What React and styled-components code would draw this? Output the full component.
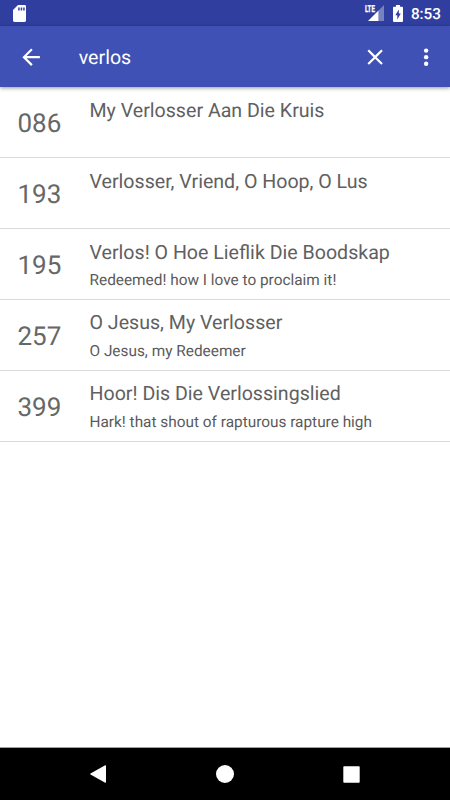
import styled, { createGlobalStyle } from 'styled-components';

const GlobalStyle = createGlobalStyle`
  * {
    box-sizing: border-box;
  }
  body {
    margin: 0;
    background-color: #fff;
    font-family: Roboto, "Liberation Sans", sans-serif;
    text-rendering: geometricPrecision;
  }
`

const Screen = styled.div`
  display: flex;
  flex-direction: column;
  width: 100%;
  height: 100vh;
  overflow: hidden;
`

const StatusBar = styled.div`
  display: flex;
  flex: none;
  align-items: center;
  height: 26px;
  padding: 0 9px 0 13px;
  background-color: #303f9f;
  color: #fff;
`

const StatusIcons = styled.div`
  display: flex;
  align-items: center;
  margin-left: auto;
`

const Network = styled.div`
  display: flex;
  position: relative;
  width: 19px;
  height: 16px;
  margin-right: 9px;
  justify-content: flex-end;
  align-items: flex-end;
`

const NetworkType = styled.span`
  position: absolute;
  top: 0;
  left: 0;
  font-size: 9.5px;
  line-height: 9px;
  font-weight: 700;
  -webkit-text-stroke: 0.35px #fff;
  transform: scaleX(0.64);
  transform-origin: left;
`

const Clock = styled.span`
  margin-left: 7.5px;
  padding-top: 2px;
  font-size: 15.3px;
  line-height: 18px;
  font-weight: 500;
`

const Toolbar = styled.header`
  display: flex;
  flex: none;
  align-items: center;
  height: 61px;
  padding: 1px 11px 0 17.5px;
  background-color: #3f51b5;
  color: #fff;
  box-shadow: 0 1px 4px rgba(0, 0, 0, 0.42);
  z-index: 1;
`

const Query = styled.div`
  flex: 1;
  margin-left: 35px;
  padding-top: 1px;
  font-size: 19.6px;
  line-height: 24px;
`

const Icon = styled.svg`
  display: block;
  flex: none;
  width: ${(props) => props.$w || 26.25}px;
  height: ${(props) => props.$h || 26.25}px;
  margin-right: ${(props) => props.$gap || 0}px;
  fill: currentColor;
`

const List = styled.main`
  flex: 1;
`

const Row = styled.div`
  display: flex;
  height: 70.9px;
  border-bottom: 1px solid #d9d9d9;

  &:last-child {
    height: 71.2px;
  }
`

const Number = styled.div`
  width: 89.5px;
  padding: 22.3px 0 0 17.5px;
  font-size: 26px;
  line-height: 31px;
  color: #676767;
`

const Title = styled.div`
  padding-top: 11.8px;
  font-size: 19.6px;
  line-height: 24px;
  color: #606060;
`

const Subtitle = styled.div`
  margin-top: 6.7px;
  font-size: 15.38px;
  line-height: 18px;
  color: #5a5a5a;
`

const NavBar = styled.nav`
  display: flex;
  flex: none;
  align-items: center;
  justify-content: space-between;
  height: 53px;
  padding: 0 90px;
  border-top: 1px solid #a0a0a0;
  background-color: #000;
  color: #fff;
`

const songs = [
  { number: '086', title: 'My Verlosser Aan Die Kruis' },
  { number: '193', title: 'Verlosser, Vriend, O Hoop, O Lus' },
  { number: '195', title: 'Verlos! O Hoe Lieflik Die Boodskap', subtitle: 'Redeemed! how I love to proclaim it!' },
  { number: '257', title: 'O Jesus, My Verlosser', subtitle: 'O Jesus, my Redeemer' },
  { number: '399', title: 'Hoor! Dis Die Verlossingslied', subtitle: 'Hark! that shout of rapturous rapture high' },
]

function App() {
  return (
    <>
      <GlobalStyle />
      <Screen>
        <StatusBar>
          <Icon $w={13} $h={17} viewBox="0 0 13 17">
            <path d="M5 0h6.6Q13 0 13 1.4v14.2q0 1.4-1.4 1.4H1.4Q0 17 0 15.600V5z" />
            <path d="M5.200 2.400h1.500v3.200H5.200zM7.700 2.400h1.500v3.200H7.700zM10.200 2.400h1.500v3.200h-1.500z" fill="#303f9f" />
          </Icon>
          <StatusIcons>
            <Network>
              <NetworkType>LTE</NetworkType>
              <Icon $w={16} $h={16} viewBox="0 0 16 16">
                <path d="M16 0v16h-5.500V5.500z" opacity="0.35" />
                <path d="M10.500 5.500V16H0z" />
              </Icon>
            </Network>
            <Icon $w={10} $h={17} viewBox="0 0 10 17">
              <path d="M3 0h4v1.700h2q1 0 1 1V16q0 1-1 1H1q-1 0-1-1V2.700q0-1 1-1h2z" />
              <path d="M5.800 4.500v4h2L4.300 14.500v-4.300h-2z" fill="#303f9f" />
            </Icon>
            <Clock>8:53</Clock>
          </StatusIcons>
        </StatusBar>
        <Toolbar>
          <Icon viewBox="0 0 24 24">
            <path d="M20 11H7.830l5.590-5.590L12 4l-8 8 8 8 1.410-1.410L7.830 13H20v-2z" />
          </Icon>
          <Query>verlos</Query>
          <Icon $gap={24.3} viewBox="0 0 24 24">
            <path d="M19 6.410L17.590 5 12 10.590 6.410 5 5 6.410 10.590 12 5 17.590 6.410 19 12 13.410 17.590 19 19 17.590 13.410 12z" />
          </Icon>
          <Icon viewBox="0 0 24 24">
            <circle cx="12" cy="6" r="2" />
            <circle cx="12" cy="12" r="2" />
            <circle cx="12" cy="18" r="2" />
          </Icon>
        </Toolbar>
        <List>
          {songs.map((song) => (
            <Row key={song.number}>
              <Number>{song.number}</Number>
              <div>
                <Title>{song.title}</Title>
                {song.subtitle && <Subtitle>{song.subtitle}</Subtitle>}
              </div>
            </Row>
          ))}
        </List>
        <NavBar>
          <Icon $w={16} $h={18} viewBox="0 0 16 18">
            <path d="M15.200 0.200Q16 0 16 0.900v16.200q0 0.900-0.800 0.700L0.500 9.500Q0 9 0.500 8.500z" />
          </Icon>
          <Icon $w={18} $h={18} viewBox="0 0 18 18">
            <circle cx="9" cy="9" r="9" />
          </Icon>
          <Icon $w={17} $h={17} viewBox="0 0 17 17">
            <rect x="0.300" y="0.300" width="16.400" height="16.400" rx="0.800" />
          </Icon>
        </NavBar>
      </Screen>
    </>
  )
}

export default App
